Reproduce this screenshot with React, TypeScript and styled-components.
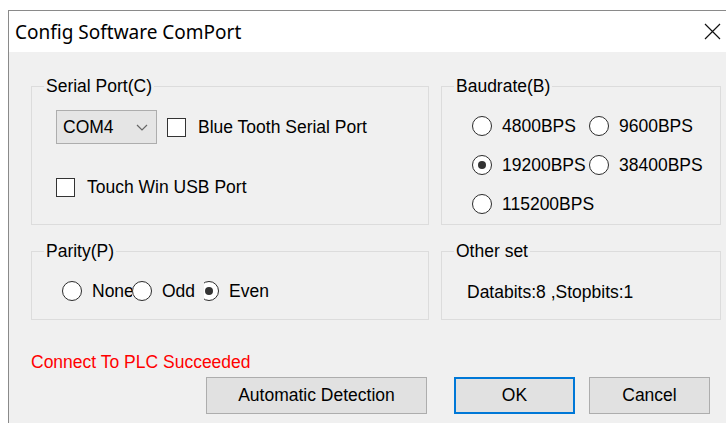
import styled, { createGlobalStyle } from "styled-components";

const GlobalStyle = createGlobalStyle`
  html, body {
    margin: 0;
    padding: 0;
    background: #fff;
    overflow: hidden;
  }
  body {
    width: 726px;
    height: 423px;
  }
`;

// window is wider and taller than the screen area, so right/bottom edges are cut
const Dialog = styled.div`
  box-sizing: content-box;
  margin: 10px 0 0 8px;
  width: 717px;
  height: 412px;
  border: 1px solid #8a8a8a;
  border-right: 0;
  border-bottom: 0;
  background: #f0f0f0;
  font-family: "Liberation Sans", Arial, sans-serif;
  font-size: 17.5px;
  color: #000;
`;

const TitleBar = styled.div`
  display: flex;
  align-items: center;
  justify-content: space-between;
  height: 41px;
  padding-left: 6px;
  background: #fff;
`;

const Title = styled.span`
  font-family: "Noto Sans", "Open Sans", sans-serif;
  font-size: 19px;
  color: #000;
`;

const CloseButton = styled.button`
  display: flex;
  align-items: center;
  justify-content: center;
  width: 28px;
  height: 41px;
  padding: 0;
  border: 0;
  background: transparent;
`;

const Body = styled.div`
  padding: 24px 0 0 22px;
`;

const Sections = styled.div`
  display: grid;
  grid-template-columns: 398px 280px;
  grid-template-rows: 149px 79px;
  column-gap: 12px;
  row-gap: 16px;
`;

const Group = styled.fieldset`
  box-sizing: border-box;
  margin: 0;
  padding: 0;
  min-width: 0;
  height: 100%;
  border: 1px solid #dcdcdc;
`;

const Caption = styled.legend`
  margin-left: 12px;
  padding: 0 2px;
  line-height: 20px;
`;

const SerialBody = styled.div`
  display: flex;
  flex-direction: column;
  gap: 26px;
  padding: 14px 0 0 24px;
`;

const Row = styled.div`
  display: flex;
  align-items: center;
  height: 34px;
`;

const Combo = styled.div`
  box-sizing: border-box;
  display: flex;
  align-items: center;
  justify-content: space-between;
  width: 101px;
  height: 34px;
  padding: 0 8px 0 6px;
  border: 1px solid #adadad;
  background: #e5e5e5;
`;

const Check = styled.label<{ $indent?: number }>`
  display: flex;
  align-items: center;
  gap: 12px;
  margin-left: ${(p) => p.$indent ?? 0}px;
`;

const CheckBox = styled.span`
  box-sizing: border-box;
  width: 19px;
  height: 19px;
  border: 1px solid #333;
  background: #fff;
`;

const RadioGrid = styled.div`
  display: grid;
  grid-template-columns: 117px auto;
  grid-auto-rows: 30px;
  row-gap: 9px;
  padding: 15px 0 0 30px;
`;

const RadioRow = styled.div`
  display: flex;
  height: 30px;
  padding: 15px 0 0 30px;
`;

// a fixed $width clips the label, the way a narrow control clips its caption
const Radio = styled.label<{ $width?: number; $overlap?: number; $front?: boolean }>`
  position: relative;
  z-index: ${(p) => (p.$front ? 1 : 0)};
  display: flex;
  align-items: center;
  gap: 10px;
  flex: none;
  width: ${(p) => (p.$width ? `${p.$width}px` : "auto")};
  margin-left: ${(p) => -(p.$overlap ?? 0)}px;
  overflow: ${(p) => (p.$width ? "hidden" : "visible")};
  white-space: nowrap;
  background: #f0f0f0;
`;

const Dot = styled.span<{ $checked?: boolean }>`
  box-sizing: border-box;
  position: relative;
  flex: none;
  width: 20px;
  height: 20px;
  border: 1.5px solid #2b2b2b;
  border-radius: 50%;
  background: #fff;

  &::after {
    content: "";
    display: ${(p) => (p.$checked ? "block" : "none")};
    position: absolute;
    left: 4.5px;
    top: 4.5px;
    width: 8px;
    height: 8px;
    border-radius: 50%;
    background: #333;
  }
`;

const Info = styled.div`
  padding: 21px 0 0 25px;
  line-height: 20px;
`;

const Status = styled.div`
  margin-top: 32px;
  line-height: 20px;
  color: #ff0000;
`;

const Actions = styled.div`
  display: flex;
  justify-content: flex-end;
  gap: 27px;
  width: 690px;
  margin-top: 5px;
  padding-right: 11px;
  box-sizing: border-box;
`;

const ActionPair = styled.div`
  display: flex;
  gap: 14px;
`;

const Button = styled.button<{ $width: number; $primary?: boolean }>`
  box-sizing: border-box;
  width: ${(p) => p.$width}px;
  height: 37px;
  padding: 0;
  border: ${(p) => (p.$primary ? "2px solid #0078d7" : "1px solid #adadad")};
  background: #e1e1e1;
  font: inherit;
  color: #000;
`;

function Chevron() {
  return (
    <svg width="12" height="7" viewBox="0 0 12 7">
      <path d="M1 1l5 5 5-5" fill="none" stroke="#666" strokeWidth="1.2" />
    </svg>
  );
}

function CloseIcon() {
  return (
    <svg width="17" height="17" viewBox="0 0 17 17">
      <path d="M1 1l15 15M16 1L1 16" stroke="#111" strokeWidth="1.2" />
    </svg>
  );
}

export default function App() {
  return (
    <>
      <GlobalStyle />
      <Dialog>
        <TitleBar>
          <Title>Config Software ComPort</Title>
          <CloseButton aria-label="Close">
            <CloseIcon />
          </CloseButton>
        </TitleBar>
        <Body>
          <Sections>
            <Group>
              <Caption>Serial Port(C)</Caption>
              <SerialBody>
                <Row>
                  <Combo>
                    <span>COM4</span>
                    <Chevron />
                  </Combo>
                  <Check $indent={10}>
                    <CheckBox />
                    Blue Tooth Serial Port
                  </Check>
                </Row>
                <Row>
                  <Check>
                    <CheckBox />
                    Touch Win USB Port
                  </Check>
                </Row>
              </SerialBody>
            </Group>

            <Group>
              <Caption>Baudrate(B)</Caption>
              <RadioGrid>
                <Radio><Dot />4800BPS</Radio>
                <Radio><Dot />9600BPS</Radio>
                <Radio><Dot $checked />19200BPS</Radio>
                <Radio><Dot />38400BPS</Radio>
                <Radio><Dot />115200BPS</Radio>
              </RadioGrid>
            </Group>

            <Group>
              <Caption>Parity(P)</Caption>
              <RadioRow>
                <Radio $width={70}><Dot />None</Radio>
                <Radio $width={72} $front><Dot />Odd</Radio>
                <Radio $overlap={5}><Dot $checked />Even</Radio>
              </RadioRow>
            </Group>

            <Group>
              <Caption>Other set</Caption>
              <Info>Databits:8 ,Stopbits:1</Info>
            </Group>
          </Sections>

          <Status>Connect To PLC Succeeded</Status>

          <Actions>
            <Button $width={221}>Automatic Detection</Button>
            <ActionPair>
              <Button $width={121} $primary>OK</Button>
              <Button $width={121}>Cancel</Button>
            </ActionPair>
          </Actions>
        </Body>
      </Dialog>
    </>
  );
}
